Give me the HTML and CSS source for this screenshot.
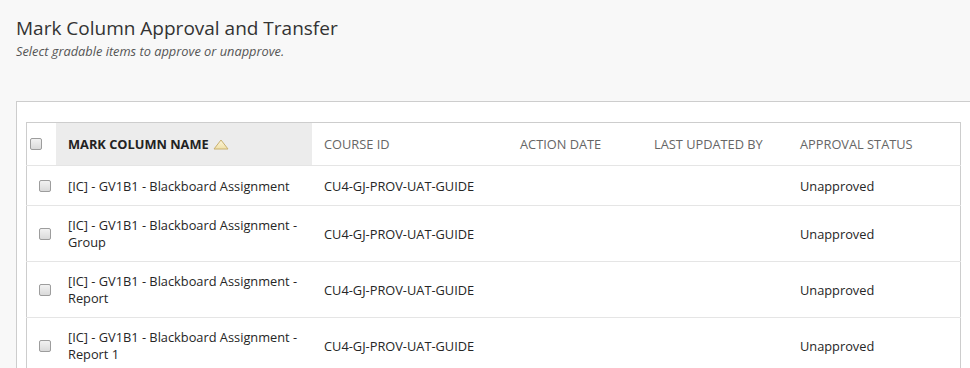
FILE: index.html
```html
<!DOCTYPE html>
<html>
<head>
<meta charset="utf-8">
<link rel="stylesheet" href="styles.css">
</head>
<body>
<div class="page">
  <h1 class="title">Mark Column Approval and Transfer</h1>
  <p class="subtitle">Select gradable items to approve or unapprove.</p>
  <div class="panel">
    <table class="grid">
      <thead>
        <tr>
          <th class="c-check"><span class="cb"></span></th>
          <th class="c-name sorted">Mark Column Name <svg class="caret" width="16" height="11" viewBox="0 0 16 11"><defs><linearGradient id="g" x1="0" y1="0" x2="0" y2="1"><stop offset="0" stop-color="#fdf7dc"/><stop offset="1" stop-color="#f0e0a8"/></linearGradient></defs><path d="M8 1 L15 10 L1 10 Z" fill="url(#g)" stroke="#c8b070" stroke-width="1" stroke-linejoin="round"/></svg></th>
          <th class="c-course">Course ID</th>
          <th class="c-action">Action Date</th>
          <th class="c-last">Last Updated By</th>
          <th class="c-status">Approval Status</th>
        </tr>
      </thead>
      <tbody>
        <tr>
          <td class="c-check"><span class="cb"></span></td>
          <td class="c-name">[IC] - GV1B1 - Blackboard Assignment</td>
          <td>CU4-GJ-PROV-UAT-GUIDE</td>
          <td></td>
          <td></td>
          <td>Unapproved</td>
        </tr>
        <tr>
          <td class="c-check"><span class="cb"></span></td>
          <td class="c-name">[IC] - GV1B1 - Blackboard Assignment - Group</td>
          <td>CU4-GJ-PROV-UAT-GUIDE</td>
          <td></td>
          <td></td>
          <td>Unapproved</td>
        </tr>
        <tr>
          <td class="c-check"><span class="cb"></span></td>
          <td class="c-name">[IC] - GV1B1 - Blackboard Assignment - Report</td>
          <td>CU4-GJ-PROV-UAT-GUIDE</td>
          <td></td>
          <td></td>
          <td>Unapproved</td>
        </tr>
        <tr>
          <td class="c-check"><span class="cb"></span></td>
          <td class="c-name">[IC] - GV1B1 - Blackboard Assignment - Report 1</td>
          <td>CU4-GJ-PROV-UAT-GUIDE</td>
          <td></td>
          <td></td>
          <td>Unapproved</td>
        </tr>
      </tbody>
    </table>
  </div>
</div>
</body>
</html>
```
FILE: styles.css
```css
html, body {
  margin: 0;
  padding: 0;
  background: #f8f8f8;
  font-family: "Open Sans", "DejaVu Sans", sans-serif;
  color: #262626;
  overflow: hidden;
}
.page {
  padding: 14px 0 0 16px;
}
.title {
  margin: 0;
  font-size: 19px;
  font-weight: 400;
  line-height: 28px;
  color: #333;
}
.subtitle {
  margin: 0;
  font-size: 12.8px;
  font-style: italic;
  line-height: 18px;
  color: #555;
}
.panel {
  margin-top: 41px;
  width: 1000px;
  background: #fff;
  border: 1px solid #cdcdcd;
  border-right: none;
  padding: 20px 0 0 9px;
}
.grid {
  border-collapse: collapse;
  table-layout: fixed;
  width: 935px;
  border: 1px solid #cdcdcd;
  font-size: 12.8px;
}
.grid th {
  height: 42px;
  padding: 0 12px;
  text-align: left;
  font-weight: 400;
  font-size: 12.8px;
  text-transform: uppercase;
  color: #666;
  border-bottom: 1px solid #e5e5e5;
  white-space: nowrap;
}
.grid th.sorted {
  background: #ececec;
  font-weight: 700;
  color: #222;
}
.caret {
  vertical-align: -1px;
  margin-left: 1px;
}
.grid td {
  padding: 11px 12px 10px;
  height: 18px;
  line-height: 17px;
  border-bottom: 1px solid #e5e5e5;
  vertical-align: middle;
  color: #262626;
}
.grid th.c-check { width: 26px; padding: 0 0 0 3px; }
.grid td.c-check { width: 17px; padding-left: 12px; padding-right: 0; }
.grid .c-name { width: 232px; }
.grid th:nth-child(3), .grid td:nth-child(3) { width: 172px; }
.grid th:nth-child(4), .grid td:nth-child(4) { width: 110px; }
.grid th:nth-child(5), .grid td:nth-child(5) { width: 122px; }
.cb {
  display: block;
  box-sizing: border-box;
  width: 12px;
  height: 12px;
  border: 1px solid #9d9d9d;
  border-radius: 2px;
  background: linear-gradient(#f2f2f2, #dadada);
}
```
